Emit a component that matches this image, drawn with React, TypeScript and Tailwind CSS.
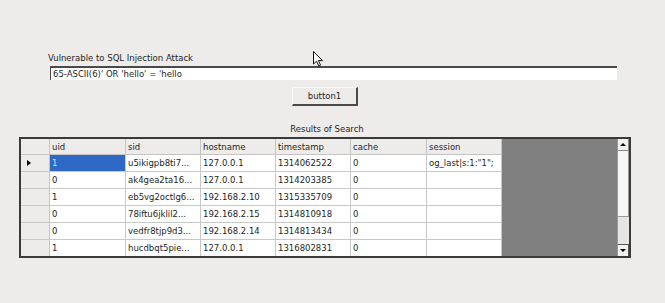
import React from 'react';

const rows = [
  { uid: '1', sid: 'u5ikigpb8ti7...', hostname: '127.0.0.1', timestamp: '1314062522', cache: '0', session: 'og_last|s:1:"1";' },
  { uid: '0', sid: 'ak4gea2ta16...', hostname: '127.0.0.1', timestamp: '1314203385', cache: '0', session: '' },
  { uid: '1', sid: 'eb5vg2octlg6...', hostname: '192.168.2.10', timestamp: '1315335709', cache: '0', session: '' },
  { uid: '0', sid: '78iftu6jklil2...', hostname: '192.168.2.15', timestamp: '1314810918', cache: '0', session: '' },
  { uid: '0', sid: 'vedfr8tjp9d3...', hostname: '192.168.2.14', timestamp: '1314813434', cache: '0', session: '' },
  { uid: '1', sid: 'hucdbqt5pie...', hostname: '127.0.0.1', timestamp: '1316802831', cache: '0', session: '' },
  { uid: '', sid: '', hostname: '', timestamp: '', cache: '', session: '' },
];

const columns = ['uid', 'sid', 'hostname', 'timestamp', 'cache', 'session'] as const;
const widths = ['w-[76px]', 'w-[75px]', 'w-[75px]', 'w-[75px]', 'w-[76px]', 'w-[75px]'];

function Cursor() {
  return (
    <svg className="absolute left-[313px] top-[51px]" width="11" height="16" viewBox="0 0 11 16">
      <path d="M0.5 0.5 L0.5 13 L3.5 10.2 L5.8 15 L7.6 14.2 L5.4 9.6 L9.5 9.6 Z" fill="#fff" stroke="#111" strokeWidth="1" strokeLinejoin="round" />
    </svg>
  );
}

function Scrollbar() {
  return (
    <div className="flex w-[12px] flex-col border-l border-[#9a9a9a] bg-[#e6e5e3]">
      <div className="flex h-[12px] items-center justify-center border-b border-r border-[#8a8a8a] bg-[#f2f1f0]">
        <div className="h-0 w-0 border-x-[3px] border-b-[3px] border-x-transparent border-b-black" />
      </div>
      <div className="h-[66px] border-b border-r border-[#9a9a9a] bg-[#f6f6f5]" />
      <div className="flex-1" />
      <div className="flex h-[12px] items-center justify-center border-r border-t border-[#555] bg-[#f2f1f0]">
        <div className="h-0 w-0 border-x-[3px] border-t-[3px] border-x-transparent border-t-black" />
      </div>
    </div>
  );
}

function ResultsGrid() {
  return (
    <div className="ml-[19px] flex h-[121px] w-[612px] border-2 border-[#3a3a3a] bg-[#808080]">
      <div className="flex w-[481px] flex-col overflow-hidden">
        <div className="flex h-[16px] shrink-0 border-b border-[#c4c4c4] bg-[#edecea]">
          <div className="w-[29px] border-r border-[#c4c4c4]" />
          {columns.map((c, i) => (
            <div key={c} className={`${widths[i]} flex items-center border-r border-[#c4c4c4] pl-[2px] text-[#1e1e1e]`}>
              {c}
            </div>
          ))}
        </div>
        {rows.map((r, ri) => (
          <div key={ri} className="flex h-[17px] shrink-0 border-b border-[#c8c8c8] bg-white">
            <div className="flex w-[29px] items-center border-r border-[#c4c4c4] bg-[#edecea] pl-[6px]">
              {ri === 0 && (
                <div className="h-0 w-0 border-y-[3.5px] border-l-[4px] border-y-transparent border-l-black" />
              )}
            </div>
            {columns.map((c, i) => (
              <div
                key={c}
                className={`${widths[i]} flex items-center overflow-hidden whitespace-nowrap border-r border-[#c8c8c8] pl-[2px] ${
                  ri === 0 && i === 0 ? 'bg-[#3068c6] text-[#cfe0ff]' : 'text-[#1e1e1e]'
                }`}
              >
                {r[c]}
              </div>
            ))}
          </div>
        ))}
      </div>
      <div className="flex-1" />
      <Scrollbar />
    </div>
  );
}

export default function App() {
  return (
    <div
      className="relative flex h-[303px] w-[665px] flex-col overflow-hidden bg-[#edeceb] text-[8.5px] leading-[10px] text-[#1e1e1e]"
      style={{ fontFamily: '"DejaVu Sans", Verdana, sans-serif' }}
    >
      <div className="ml-[48px] mt-[53px] h-[10px]">Vulnerable to SQL Injection Attack</div>
      <div className="ml-[50px] mt-[3px] flex h-[14px] w-[567px] items-center border-l border-t-2 border-[#4a4a4a] border-b-[#f4f4f4] border-r-[#f4f4f4] bg-white pl-[2px]">
        65-ASCII(6)' OR 'hello' = 'hello
      </div>
      <button className="ml-[292px] mt-[7px] flex h-[19px] w-[66px] items-center justify-center border border-b-2 border-r-2 border-[#f8f8f8] border-b-[#4a4a4a] border-r-[#4a4a4a] bg-[#edeceb]">
        button1
      </button>
      <div className="ml-[19px] mt-[18px] h-[10px] w-[616px] text-center">Results of Search</div>
      <div className="mt-[3px]">
        <ResultsGrid />
      </div>
      <Cursor />
    </div>
  );
}
